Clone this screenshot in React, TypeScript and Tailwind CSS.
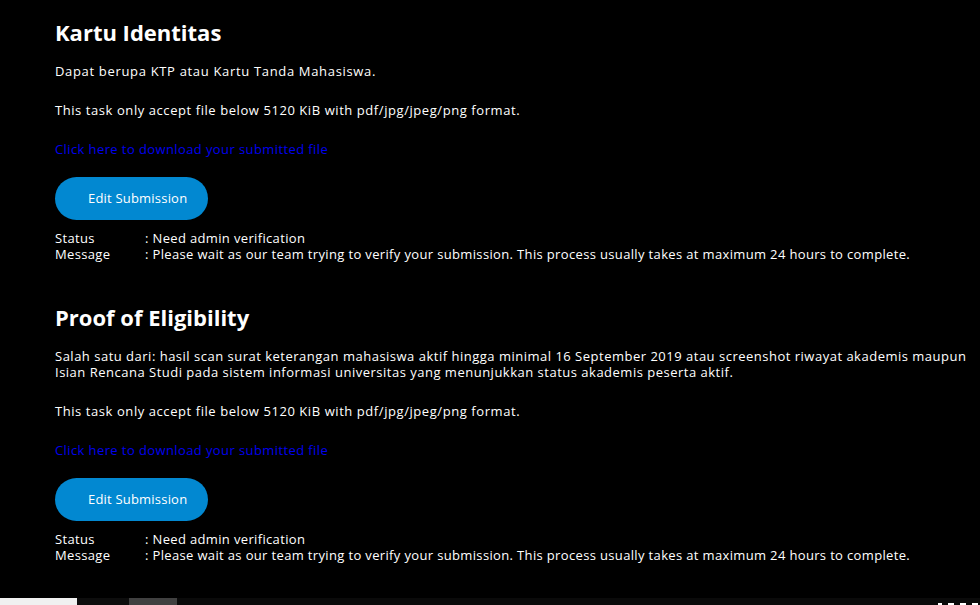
import React from "react";

function Task({
  title,
  desc,
  descTracking,
  first,
}: {
  title: string;
  desc: React.ReactNode;
  descTracking: string;
  first?: boolean;
}) {
  return (
    <section className={first ? "pt-[18px]" : "pt-[41px]"}>
      <h2 className="text-[22px] leading-[28px] font-bold tracking-normal text-white">{title}</h2>
      <p className={`mt-[17px] whitespace-nowrap text-[13px] leading-[16px] text-white ${descTracking}`}>{desc}</p>
      <p className="mt-[23px] text-[13px] leading-[16px] tracking-[0.57px] text-white">
        This task only accept file below 5120 KiB with pdf/jpg/jpeg/png format.
      </p>
      <a className="mt-[23px] block w-fit text-[13px] leading-[16px] tracking-[0.4px] text-[#0000ee]" href="#">
        Click here to download your submitted file
      </a>
      <button className="mt-[20px] flex h-[43px] w-[153px] items-center rounded-[22px] bg-[#0288d1] pl-[33px] text-[13px] tracking-[0.2px] text-white">
        Edit Submission
      </button>
      <div className="mt-[10px] text-[13px] leading-[16px] tracking-[0.35px] text-white">
        <div className="flex h-[16px]">
          <span className="w-[90px]">Status</span>
          <span>: Need admin verification</span>
        </div>
        <div className="flex h-[16px]">
          <span className="w-[90px]">Message</span>
          <span className="whitespace-nowrap">
            : Please wait as our team trying to verify your submission. This process usually takes at maximum 24 hours
            to complete.
          </span>
        </div>
      </div>
    </section>
  );
}

export default function App() {
  return (
    <div
      className="flex h-screen flex-col overflow-hidden bg-black"
      style={{ fontFamily: '"Open Sans", Arial, sans-serif' }}
    >
      <main className="flex-1 pl-[55px]">
        <Task
          first
          title="Kartu Identitas"
          descTracking="tracking-[0.67px]"
          desc="Dapat berupa KTP atau Kartu Tanda Mahasiswa."
        />
        <Task
          title="Proof of Eligibility"
          descTracking="tracking-[0.5px]"
          desc={
            <>
              Salah satu dari: hasil scan surat keterangan mahasiswa aktif hingga minimal 16 September 2019 atau
              screenshot riwayat akademis maupun
              <br />
              Isian Rencana Studi pada sistem informasi universitas yang menunjukkan status akademis peserta aktif.
            </>
          }
        />
      </main>
      <div className="flex h-[7px] shrink-0 bg-[#0a0a0a]">
        <div className="w-[77px] bg-[#f0f0f0]" />
        <div className="w-[52px] bg-[#0d0d0d]" />
        <div className="w-[48px] bg-[#404040]" />
        <div className="flex-1" />
        <div className="mr-[2px] flex items-end gap-[6px]">
          <div className="h-[2px] w-[4px] bg-white" />
          <div className="h-[2px] w-[6px] bg-white" />
          <div className="h-[2px] w-[6px] bg-white" />
          <div className="h-[2px] w-[6px] bg-white" />
        </div>
      </div>
    </div>
  );
}
